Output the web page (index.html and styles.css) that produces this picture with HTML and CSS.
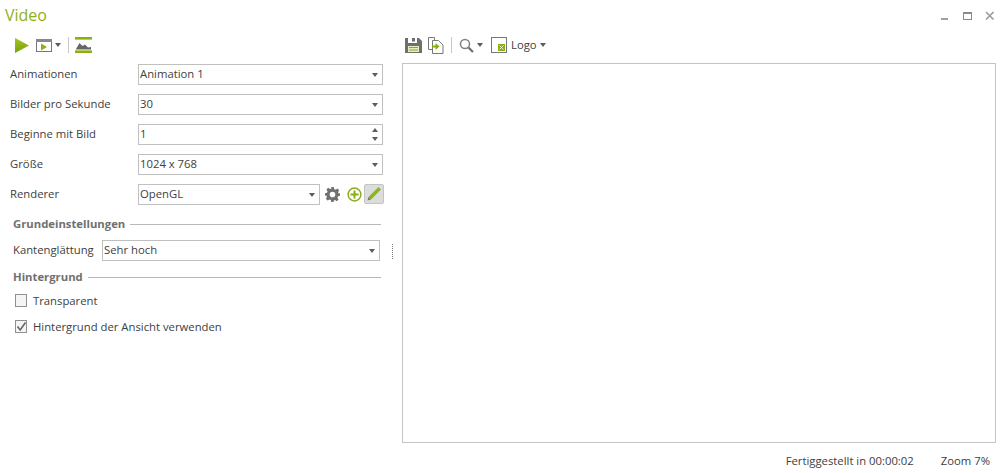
FILE: index.html
```html
<!DOCTYPE html>
<html lang="de">
<head>
<meta charset="utf-8">
<title>Video</title>
<link rel="stylesheet" href="styles.css">
</head>
<body>
<div class="app">
  <header class="titlebar">
    <h1 class="title">Video</h1>
    <div class="winctl">
      <svg width="10" height="10" viewBox="0 0 10 10"><rect x="0" y="7" width="7" height="2" fill="#a0a0a0"/></svg>
      <svg width="10" height="10" viewBox="0 0 10 10"><rect x="0.5" y="1.500" width="8" height="7" fill="none" stroke="#8a8a8a"/><rect x="0" y="1" width="9" height="2" fill="#8a8a8a"/></svg>
      <svg width="10" height="10" viewBox="0 0 10 10"><path d="M1 1l7.500 7.500M8.500 1L1 8.500" stroke="#999" stroke-width="1.600" fill="none"/></svg>
    </div>
  </header>
  <main class="content">
    <section class="left">
      <div class="toolbar tb-left">
        <svg width="14" height="15" viewBox="0 0 14 15"><defs><linearGradient id="pg" x1="0" y1="0" x2="0" y2="1"><stop offset="0" stop-color="#a4c420"/><stop offset="1" stop-color="#7aa00c"/></linearGradient></defs><path d="M0 0L14 7.500L0 15z" fill="url(#pg)"/></svg>
        <span class="tool">
          <svg width="16" height="13" viewBox="0 0 16 13"><rect x="0.500" y="0.500" width="15" height="12" fill="#fff" stroke="#777"/><rect x="0" y="0" width="16" height="3" fill="#888"/><path d="M5 4.500L11 8L5 11.500z" fill="#88b010"/></svg>
          <i class="caret"></i>
        </span>
        <i class="sep"></i>
        <svg width="17" height="16" viewBox="0 0 17 16"><rect width="17" height="2.600" fill="#88b010"/><rect y="13.400" width="17" height="2.600" fill="#88b010"/><path d="M1 12L4.500 6L7.500 9L10 7.500L13 10.500L16 10V12.500H1z" fill="#666"/></svg>
      </div>
      <div class="form">
        <div class="row"><label>Animationen</label><div class="field">Animation 1<i class="caret"></i></div></div>
        <div class="row"><label>Bilder pro Sekunde</label><div class="field">30<i class="caret"></i></div></div>
        <div class="row"><label>Beginne mit Bild</label><div class="field">1<span class="spin"><i class="up"></i><i class="down"></i></span></div></div>
        <div class="row"><label>Größe</label><div class="field">1024 x 768<i class="caret"></i></div></div>
        <div class="row"><label>Renderer</label><div class="field short">OpenGL<i class="caret"></i></div>
          <div class="r-icons">
            <svg width="15" height="15" viewBox="0 0 24 24"><path fill="#707070" fill-rule="evenodd" d="M10 0h4l.7 3.300 2.300 1 2.900-1.800 2.800 2.800-1.800 2.900 1 2.300L24 10v4l-3.100.7-1 2.300 1.800 2.900-2.800 2.800-2.900-1.800-2.300 1L14 24h-4l-.7-3.100-2.300-1-2.900 1.800-2.800-2.800 1.800-2.900-1-2.300L0 14v-4l3.100-.7 1-2.300L2.300 4.100l2.800-2.800L8 3.300l2.300-1zM12 7.500a4.500 4.500 0 1 0 0 9 4.500 4.500 0 0 0 0-9z"/></svg>
            <svg class="plus" width="15" height="15" viewBox="0 0 15 15"><circle cx="7.500" cy="7.500" r="6.400" fill="#fff" stroke="#88b010" stroke-width="1.500"/><path d="M7.500 3.500v8M3.500 7.500h8" stroke="#88b010" stroke-width="2"/></svg>
            <span class="pencil"><svg width="16" height="16" viewBox="0 0 16 16"><path d="M12.500 1L15 3.500L5 13.500L2.500 11z" fill="#88b81a"/><path d="M2.500 11L1.500 14.500L5 13.500z" fill="#777"/></svg></span>
          </div>
        </div>
      </div>
      <div class="group head-a"><span>Grundeinstellungen</span><i></i></div>
      <div class="aa"><label>Kantenglättung</label><div class="field">Sehr hoch<i class="caret"></i></div></div>
      <div class="group head-b"><span>Hintergrund</span><i></i></div>
      <div class="check"><span class="box"></span>Transparent</div>
      <div class="check c2"><span class="box"><svg width="11" height="11" viewBox="0 0 11 11"><path d="M1.500 5.500L4.200 9L9.500 1.500" fill="none" stroke="#666" stroke-width="1.600"/></svg></span>Hintergrund der Ansicht verwenden</div>
    </section>
    <div class="splitter"><i></i></div>
    <section class="right">
      <div class="toolbar tb-right">
        <svg width="17" height="17" viewBox="0 0 17 17"><path d="M0 1h3v5h9V1h2l3 3v12H0z" fill="#6f6f6f"/><rect x="7" y="1" width="3" height="3.500" fill="#6f6f6f"/><rect x="3" y="9" width="11" height="6" fill="#e6efc0"/><path d="M4 10.500h9M4 13h9" stroke="#88b010" stroke-width="1.200"/></svg>
        <svg class="export" width="16" height="17" viewBox="0 0 16 17"><path d="M.5.500h6v12h-6z" fill="#fff" stroke="#777"/><path d="M4.500 3.500h6l4.500 4.500v8.500h-10.500z" fill="#fff" stroke="#777"/><path d="M4 8.500h3.500V6l4 3.500-4 3.500v-2.500H4z" fill="#88b010"/></svg>
        <i class="sep"></i>
        <span class="tool zoom">
          <svg width="15" height="15" viewBox="0 0 15 15"><circle cx="6" cy="6" r="4.500" fill="none" stroke="#808080" stroke-width="1.500"/><path d="M9.500 9.500L14 14" stroke="#707070" stroke-width="2.200"/></svg>
          <i class="caret"></i>
        </span>
        <span class="tool logo">
          <svg width="16" height="16" viewBox="0 0 16 16"><rect x=".5" y=".5" width="15" height="15" fill="#fff" stroke="#777"/><rect x="7" y="7" width="7" height="7" fill="#88b010"/><path d="M8.500 8.500l4 4M12.500 8.500l-4 4" stroke="#e8f0c8"/></svg>
          <span class="logo-text">Logo</span><i class="caret"></i>
        </span>
      </div>
      <div class="preview"></div>
    </section>
  </main>
  <footer class="status"><span>Fertiggestellt in 00:00:02</span><span>Zoom 7%</span></footer>
</div>
</body>
</html>
```
FILE: styles.css
```css
* { box-sizing: border-box; }
html, body { margin: 0; height: 100%; }
body {
  background: #fff;
  color: #404040;
  font-family: "Open Sans", "Noto Sans", "Liberation Sans", sans-serif;
  font-size: 11.3px;
  overflow: hidden;
}
i { display: block; font-style: normal; }
svg { display: block; flex: none; }
.app { width: 1005px; height: 473px; display: flex; flex-direction: column; }

.titlebar { height: 30px; display: flex; justify-content: space-between; align-items: center; padding: 0 10px 0 5px; flex: none; }
.title { margin: 0; font-size: 16px; font-weight: 400; color: #8fb015; line-height: 30px; }
.winctl { display: flex; gap: 12px; padding-top: 1px; }

.content { display: flex; flex: 1; min-height: 0; }
.left { width: 388px; flex: none; display: flex; flex-direction: column; }
.splitter { width: 14px; flex: none; padding: 214px 0 0 4px; }
.splitter i { height: 15px; border-left: 1px dotted #777; }
.right { flex: none; width: 594px; display: flex; flex-direction: column; }

.toolbar { height: 33px; flex: none; display: flex; align-items: center; }
.tb-left { padding: 0 0 3px 15px; }
.tb-left .tool { margin-left: 7px; }
.tb-left .sep { margin: 0 6px 0 7px; }
.tb-right { padding: 0 0 3px 3px; }
.tb-right .export { margin-left: 6px; }
.tb-right .sep { margin: 0 7px 0 7px; }
.tool { display: flex; align-items: center; gap: 3px; }
.logo { margin-left: 8px; color: #404040; gap: 4px; }
.logo-text { padding-bottom: 2px; margin-right: -1px; }
.sep { width: 1px; height: 16px; background: #c8c8c8; }

.caret, .down { width: 0; height: 0; border-left: 3.500px solid transparent; border-right: 3.500px solid transparent; border-top: 4px solid #5c5c5c; }
.up { width: 0; height: 0; border-left: 3.500px solid transparent; border-right: 3.500px solid transparent; border-bottom: 4px solid #5c5c5c; }

.form { padding: 1px 0 0 10px; display: flex; flex-direction: column; gap: 9px; }
.row { display: flex; align-items: center; height: 21px; }
.row label { width: 128px; flex: none; padding-bottom: 2px; }
.aa label { padding-bottom: 2px; }
.field { height: 21px; display: flex; align-items: center; justify-content: space-between; width: 245px; border: 1px solid #c0c0c0; background: #fff; padding: 0 4px 2px 1px; }
.field .caret, .field .spin { margin-top: 2px; }
.field.short { width: 182px; }
.spin { display: flex; flex-direction: column; gap: 5px; }
.r-icons { display: flex; align-items: center; margin-left: 5px; }
.plus { margin-left: 7px; }
.pencil { margin: -2px 0 0 2px; width: 20px; height: 20px; display: flex; align-items: center; justify-content: center; background: #dcdcdc; border: 1px solid #c4c4c4; border-radius: 2px; }

.group { display: flex; align-items: center; gap: 6px; padding-left: 13px; font-weight: 700; color: #707070; height: 16px; }
.group span { padding-bottom: 1px; margin-right: -1px; }
.group i { height: 1px; background: #b8b8b8; flex: 1; margin-right: 7px; }
.head-a { margin-top: 11px; }
.head-b { margin-top: 8px; }
.aa { display: flex; align-items: center; margin-top: 8px; padding-left: 13px; height: 21px; }
.aa label { width: 89px; flex: none; }
.aa .field { width: 278px; }

.check { display: flex; align-items: center; gap: 6px; padding-left: 15px; margin-top: 7px; height: 16px; }
.check.c2 { margin-top: 10px; }
.box { width: 12px; height: 13px; border: 1px solid #909090; background: #f4f4f4; display: flex; align-items: center; justify-content: center; flex: none; }

.preview { width: 594px; height: 380px; border: 1px solid #c4c4c4; background: #fff; }

.status { height: 30px; flex: none; display: flex; justify-content: flex-end; align-items: center; gap: 27px; padding: 4px 15px 0 0; }
```
